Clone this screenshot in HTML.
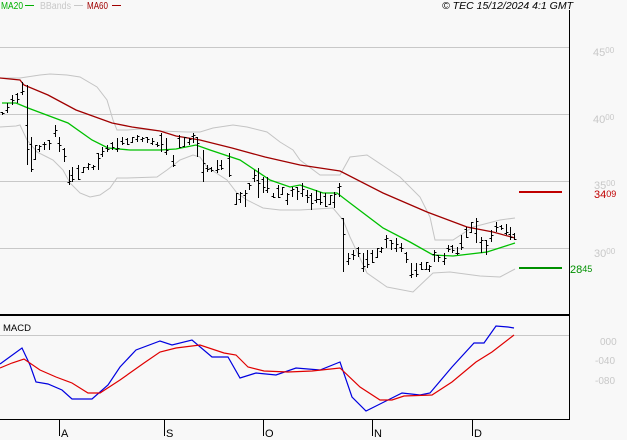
<!DOCTYPE html>
<html><head><meta charset="utf-8"><style>
html,body{margin:0;padding:0;background:#f8f8f8;}
body{width:627px;height:440px;overflow:hidden;position:relative;font-family:"Liberation Sans",sans-serif;}
svg{position:absolute;left:0;top:0;}
</style></head><body>
<svg id="s" width="627" height="440" viewBox="0 0 627 440" xmlns="http://www.w3.org/2000/svg">
<rect width="627" height="440" fill="#f8f8f8"/>
<g stroke="#c8c8c8" stroke-width="1" shape-rendering="crispEdges">
<line x1="0" y1="47.5" x2="569" y2="47.5"/>
<line x1="0" y1="114.5" x2="569" y2="114.5"/>
<line x1="0" y1="181.5" x2="569" y2="181.5"/>
<line x1="0" y1="248.5" x2="569" y2="248.5"/>
<line x1="0" y1="335.5" x2="569" y2="335.5"/>
</g>
<g fill="none" stroke="#c4c4c4" stroke-width="1">
<polyline points="0,78 20,78 40,75 50,74 67,75 80,77 97,87 107,100 113,120 117,130 127,130 140,129 160,131 187,132 200,132 213,128 233,125 247,127 267,132 280,142 293,150 300,160 320,175 340,175 350,157 367,155 400,177 420,197 430,217 435,240 453,240 473,227 500,220 515,218"/>
<polyline points="0,127 16,126 20,125 27,140 37,152 47,157 53,160 63,170 70,183 80,193 90,197 100,195 110,188 117,178 127,178 157,177 167,170 180,160 193,155 200,157 207,167 227,180 237,193 247,200 263,208 280,210 300,210 333,208 343,220 350,237 367,273 387,287 413,292 433,273 450,272 480,276 500,277 515,269"/>
</g>
<polyline fill="none" stroke="#a00000" stroke-width="1.3" points="0,78 20,80 24,85 48,95 76,110 112,123 132,127 160,131 176,136 200,140 232,148 265,157 300,165 340,171 383,193 427,212 467,227 493,232 515,238"/>
<polyline fill="none" stroke="#00c000" stroke-width="1.3" points="2,103 16,103 28,108 52,117 68,123 92,140 108,148 130,150 160,150 176,149 196,145 210,150 240,160 270,180 290,187 300,185 323,193 337,193 350,203 383,228 410,242 433,255 453,256 487,252 515,243"/>
<g id="bars" stroke="#000" stroke-width="1" shape-rendering="crispEdges"></g>
<g stroke-width="2" shape-rendering="crispEdges">
<line x1="519" y1="192" x2="562" y2="192" stroke="#c00000"/>
<line x1="519" y1="268" x2="562" y2="268" stroke="#009000"/>
</g>
<polyline fill="none" stroke="#0000e0" stroke-width="1.2" points="0,364 22,348 30,365 36,382 48,384 62,390 72,399 92,399 108,385 120,367 136,350 160,341 172,345 192,340 212,357 228,357 240,378 256,373 276,375 296,368 320,370 340,362 352,397 366,411 384,402 402,393 420,395 430,393 452,367 474,343 484,343 496,326 508,327 514,328"/>
<polyline fill="none" stroke="#e00000" stroke-width="1.2" points="0,368 12,363 24,359 40,370 56,377 72,383 88,393 100,393 120,380 144,363 160,352 176,348 200,345 224,353 236,355 248,367 264,371 288,372 312,371 340,368 360,387 380,400 392,400 404,396 432,395 452,382 476,362 492,352 514,335"/>
<g shape-rendering="crispEdges">
<rect x="569" y="10" width="1" height="410" fill="#000"/>
<rect x="0" y="314" width="569" height="2" fill="#000"/>
<rect x="0" y="419" width="570" height="1" fill="#000"/>
<rect x="59" y="420" width="1" height="16" fill="#000"/>
<rect x="164" y="420" width="1" height="16" fill="#000"/>
<rect x="263" y="420" width="1" height="16" fill="#000"/>
<rect x="372" y="420" width="1" height="16" fill="#000"/>
<rect x="472" y="420" width="1" height="16" fill="#000"/>
</g>
<g font-size="11" fill="#000">
<text x="61" y="437">A</text><text x="166" y="437">S</text><text x="265" y="437">O</text><text x="374" y="437">N</text><text x="474" y="437">D</text>
<text x="3" y="331" font-size="9" textLength="28" lengthAdjust="spacingAndGlyphs">MACD</text>
</g>
<g font-size="11" fill="#c8c8c8">
<text x="593" y="56">45<tspan font-size="8" dy="-3">00</tspan></text>
<text x="593" y="123">40<tspan font-size="8" dy="-3">00</tspan></text>
<text x="594" y="189">35<tspan font-size="8" dy="-3">00</tspan></text>
<text x="594" y="257">30<tspan font-size="8" dy="-3">00</tspan></text>
<text x="600" y="345" font-size="10">000</text>
<text x="595" y="364" font-size="10">-040</text>
<text x="595" y="384" font-size="10">-080</text>
</g>
<text x="594" y="198" font-size="11" fill="#c00000">34<tspan font-size="9" dy="-1">09</tspan></text>
<text x="570" y="273" font-size="11" fill="#009000">28<tspan font-size="9" dy="-1">45</tspan></text>
<g font-size="10">
<text x="1" y="9" fill="#00b000" textLength="22" lengthAdjust="spacingAndGlyphs">MA20</text>
<rect x="25" y="5" width="9" height="1" fill="#00b000"/>
<text x="40" y="9" fill="#c8c8c8" textLength="31" lengthAdjust="spacingAndGlyphs">BBands</text>
<rect x="74" y="5" width="9" height="1" fill="#c8c8c8"/>
<text x="87" y="9" fill="#a00000" textLength="21" lengthAdjust="spacingAndGlyphs">MA60</text>
<rect x="112" y="5" width="9" height="1" fill="#a00000"/>
<text x="442" y="9" fill="#000" font-style="italic" textLength="131" lengthAdjust="spacingAndGlyphs">© TEC 15/12/2024 4:1 GMT</text>
</g>
</svg>
<script>
var d=[[2,112,115],[7,103,113],[12,95,105],[17,93,103],[22,82,95],[27,85,165],[31,137,172],[35,145,160],[39,145,152],[44,142,150],[49,140,150],[55,125,137],[59,137,152],[64,148,162],[69,170,185],[72,167,182],[78,165,180],[83,167,173],[88,163,170],[93,165,170],[98,153,170],[102,147,157],[107,145,152],[112,142,150],[117,138,152],[122,137,145],[127,138,145],[132,137,143],[137,135,142],[142,137,142],[147,137,143],[152,138,145],[157,142,147],[161,133,152],[166,138,155],[173,155,167],[179,135,148],[184,137,147],[189,138,145],[193,133,143],[197,137,157],[203,150,182],[207,165,172],[211,167,172],[217,160,173],[221,160,170],[229,153,177],[236,193,205],[240,192,203],[245,190,207],[249,183,190],[254,170,182],[258,168,198],[263,177,193],[267,177,193],[273,193,198],[278,185,198],[282,187,195],[287,193,205],[292,187,197],[297,187,200],[302,183,197],[307,190,203],[311,193,210],[316,190,203],[320,192,205],[325,193,207],[330,195,205],[334,192,208],[339,183,197],[343,218,272],[348,253,265],[353,250,260],[358,247,257],[363,253,272],[367,250,268],[372,250,263],[377,248,258],[381,247,253],[386,235,248],[391,240,250],[396,238,252],[401,243,252],[406,252,263],[411,263,278],[416,263,277],[421,262,270],[426,262,270],[429,265,272],[434,250,262],[438,255,262],[444,253,265],[448,245,252],[452,245,253],[457,247,255],[461,235,250],[466,227,238],[471,222,233],[476,218,243],[481,237,253],[486,240,255],[491,230,242],[496,222,232],[501,225,230],[506,224,235],[510,227,240],[514,233,240]];
var g=document.getElementById('bars'),h='';
d.forEach(function(b,i){var x=b[0]+.5,o=b[1]+(b[2]-b[1])*((i*37)%10)/10,c=b[1]+(b[2]-b[1])*((i*61+3)%10)/10;
h+='<line x1="'+x+'" y1="'+b[1]+'" x2="'+x+'" y2="'+b[2]+'"/><line x1="'+(x-2)+'" y1="'+Math.round(o)+'.5" x2="'+x+'" y2="'+Math.round(o)+'.5"/><line x1="'+x+'" y1="'+Math.round(c)+'.5" x2="'+(x+2)+'" y2="'+Math.round(c)+'.5"/>';});
g.innerHTML=h;
</script>
</body></html>
